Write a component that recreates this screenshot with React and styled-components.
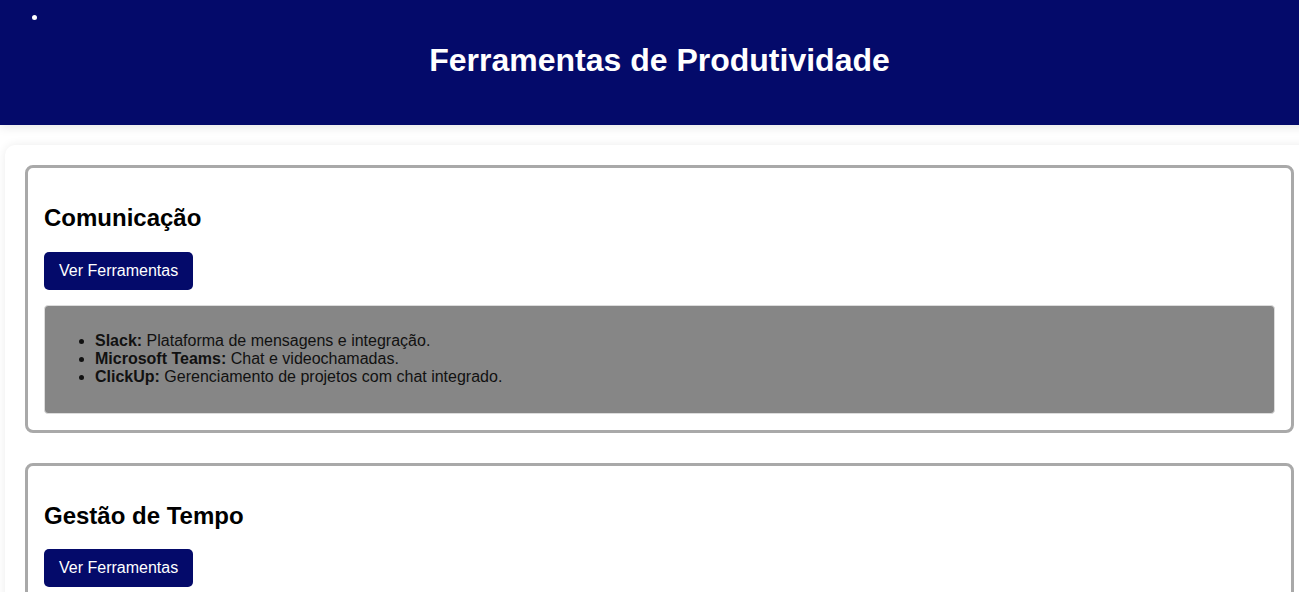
import React from "react";
import styled, { createGlobalStyle } from "styled-components";

const Global = createGlobalStyle`
  html, body { margin: 0; padding: 0; overflow-x: hidden; }
  body { font-family: "Liberation Sans", Arial, sans-serif; background: #fff; color: #000; }
`;

const Page = styled.div`
  width: 1319px;
`;

const Header = styled.header`
  position: relative;
  z-index: 1;
  background: #040a6a;
  color: #fff;
  padding: 8px 10px 0;
  height: 125px;
  box-sizing: border-box;
  display: flex;
  flex-direction: column;
  box-shadow: 0 2px 10px rgba(0, 0, 0, 0.1);
`;

const Nav = styled.ul`
  margin: 0;
  padding-left: 38px;
  height: 18px;
  font-size: 16px;
  line-height: 18px;
`;

const Title = styled.h1`
  margin: 16px 0 0;
  text-align: center;
  font-size: 32px;
  font-weight: bold;
  line-height: 37px;
`;

const Main = styled.main`
  margin: 20px 5px 0;
  padding: 20px;
  background: #fff;
  border-radius: 10px;
  box-shadow: 0 0 10px rgba(0, 0, 0, 0.08);
  display: flex;
  flex-direction: column;
  gap: 30px;
`;

const Card = styled.section`
  border: 3px solid #a9a9a9;
  border-radius: 8px;
  padding: 16px;
  width: 1231px;
`;

const Heading = styled.h2`
  font-size: 24px;
  margin: 20px 0;
  line-height: 27.6px;
`;

const Button = styled.button`
  display: block;
  background: #040a6a;
  color: #fff;
  border: none;
  border-radius: 5px;
  padding: 10px 15px;
  font-family: "Liberation Sans", Arial, sans-serif;
  font-size: 16px;
  line-height: 18px;
  cursor: pointer;
`;

const ToolBox = styled.div`
  margin-top: 15px;
  background: #868686;
  border: 1px solid #dcdcdc;
  border-radius: 4px;
  padding: 10px;
`;

const ToolList = styled.ul`
  margin: 16px 0;
  padding-left: 40px;
  font-size: 16px;
  line-height: 18.4px;
  color: #111;
`;

const sections = [
  {
    title: "Comunicação",
    open: true,
    tools: [
      ["Slack:", "Plataforma de mensagens e integração."],
      ["Microsoft Teams:", "Chat e videochamadas."],
      ["ClickUp:", "Gerenciamento de projetos com chat integrado."],
    ],
  },
  { title: "Gestão de Tempo", open: false, tools: [] },
];

export default function App() {
  return (
    <Page>
      <Global />
      <Header>
        <Nav>
          <li></li>
        </Nav>
        <Title>Ferramentas de Produtividade</Title>
      </Header>
      <Main>
        {sections.map((s) => (
          <Card key={s.title}>
            <Heading>{s.title}</Heading>
            <Button>Ver Ferramentas</Button>
            {s.open && (
              <ToolBox>
                <ToolList>
                  {s.tools.map(([name, desc]) => (
                    <li key={name}>
                      <strong>{name}</strong> {desc}
                    </li>
                  ))}
                </ToolList>
              </ToolBox>
            )}
          </Card>
        ))}
      </Main>
    </Page>
  );
}
